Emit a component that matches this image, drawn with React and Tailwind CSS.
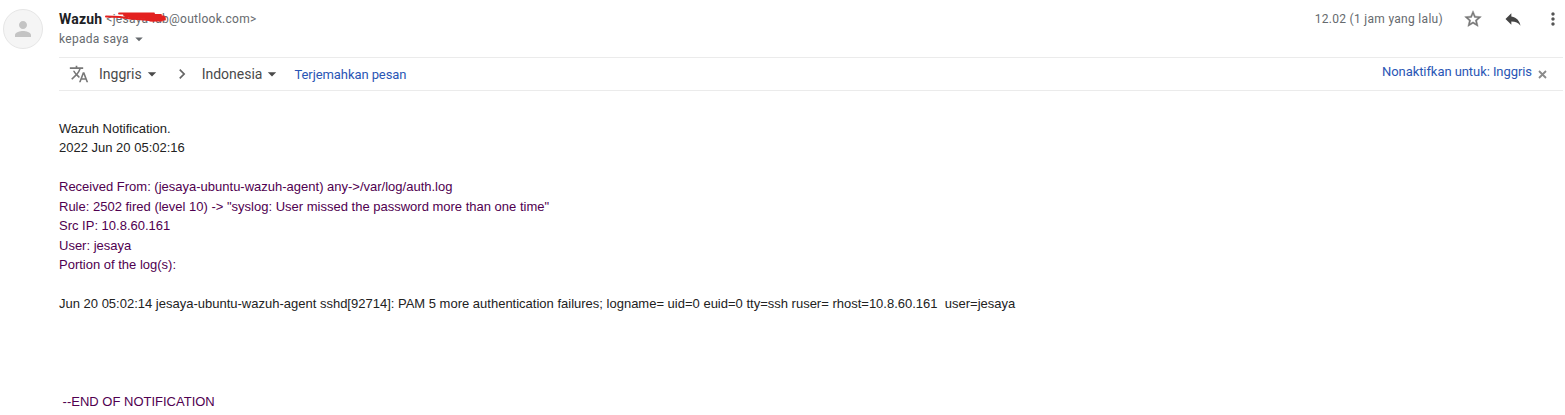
import { MdArrowDropDown, MdChevronRight, MdMoreVert, MdPerson, MdReply, MdTranslate } from "react-icons/md";

function Avatar() {
  return (
    <div className="mt-[9px] ml-[3px] flex size-10 shrink-0 items-center justify-center rounded-full border border-[#e6e6e6] bg-[#f5f5f5] text-[#c4c4c4]">
      <MdPerson size={24} />
    </div>
  );
}

function StarIcon() {
  return (
    <svg className="ml-5 text-[#777]" width="20" height="20" viewBox="0 0 24 24" fill="currentColor" stroke="currentColor" strokeWidth="0.5">
      <path d="M22 9.24l-7.19-.62L12 2 9.19 8.63 2 9.24l5.46 4.73L5.82 21 12 17.27 18.18 21l-1.63-7.03L22 9.24zM12 15.4l-3.76 2.27 1-4.28-3.32-2.88 4.38-.38L12 6.1l1.71 4.04 4.38.38-3.32 2.88 1 4.28L12 15.4z" />
    </svg>
  );
}

function Header() {
  return (
    <header className="flex h-[57px] justify-between text-[12px] tracking-[0.3px] text-[#666a6e]">
      <div className="flex flex-col pt-[9px]">
        <div className="relative flex h-5 items-center">
          <span className="text-[14px] font-bold tracking-[0.2px] text-[#202124]">Wazuh</span>
          <span className="ml-[4px] tracking-[0.28px]">&lt;jesaya-lab@outlook.com&gt;</span>
          <svg className="absolute top-[2px] left-[45px]" width="64" height="14" viewBox="0 0 64 14" fill="none" stroke="#e3201f" strokeLinecap="round" strokeLinejoin="round">
            <path d="M2 5.5L16 6L26 7.5L40 8.5L50 9.5" strokeWidth="2" />
            <path d="M15 2.500L50 2.500L20 4L57 4L22 5.500L60 5.500L26 6.500L61 7L36 8L61 8.500L46 9.500L58 9.500" strokeWidth="1.8" />
          </svg>
        </div>
        <div className="flex h-5 items-center">
          <span>kepada saya</span>
          <MdArrowDropDown size={18} className="ml-px" />
        </div>
      </div>
      <div className="mr-[2px] flex h-[38px] items-center">
        <span>12.02 (1 jam yang lalu)</span>
        <StarIcon />
        <MdReply size={20} className="ml-5 text-[#444]" />
        <MdMoreVert size={20} className="ml-5 text-[#555]" />
      </div>
    </header>
  );
}

function TranslateBar() {
  return (
    <div className="mr-[2px] flex h-[34px] items-center border-y border-[#ebebeb] text-[14px] text-[#4a4a4a]">
      <MdTranslate size={20} className="ml-[10px] text-[#777]" />
      <span className="ml-[10px]">Inggris</span>
      <MdArrowDropDown size={20} />
      <MdChevronRight size={20} className="ml-[10px] text-[#666]" />
      <span className="ml-[10px]">Indonesia</span>
      <MdArrowDropDown size={20} />
      <span className="mt-[2px] ml-[12px] text-[13px] tracking-[-0.08px] text-[#2a56b5]">Terjemahkan pesan</span>
      <span className="mb-[5px] ml-auto text-[13px] tracking-[-0.07px] text-[#2a56b5]">Nonaktifkan untuk: Inggris</span>
      <svg className="mr-[16px] ml-[6px]" width="9" height="9" viewBox="0 0 9 9" stroke="#8a8a8a" strokeWidth="1.8">
        <path d="M1 1L8 8M8 1L1 8" />
      </svg>
    </div>
  );
}

function Message() {
  return (
    <div className="pt-[27.5px] font-['Liberation_Sans',Arial,sans-serif] text-[13px] leading-[19.5px] whitespace-pre text-[#222]">
      <p>Wazuh Notification.</p>
      <p>2022 Jun 20 05:02:16</p>
      <div className="py-[19.5px] text-[#500050]">
        <p>Received From: (jesaya-ubuntu-wazuh-agent) any-&gt;/var/log/auth.log</p>
        <p>Rule: 2502 fired (level 10) -&gt; "syslog: User missed the password more than one time"</p>
        <p>Src IP: 10.8.60.161</p>
        <p>User: jesaya</p>
        <p>Portion of the log(s):</p>
      </div>
      <p>Jun 20 05:02:14 jesaya-ubuntu-wazuh-agent sshd[92714]: PAM 5 more authentication failures; logname= uid=0 euid=0 tty=ssh ruser= rhost=10.8.60.161  user=jesaya</p>
      <p className="pt-[78px] text-[#500050]"> --END OF NOTIFICATION</p>
    </div>
  );
}

export default function App() {
  return (
    <div className="flex h-[415px] overflow-hidden bg-white font-[Roboto,sans-serif]">
      <Avatar />
      <main className="ml-4 min-w-0 flex-1">
        <Header />
        <TranslateBar />
        <Message />
      </main>
    </div>
  );
}
